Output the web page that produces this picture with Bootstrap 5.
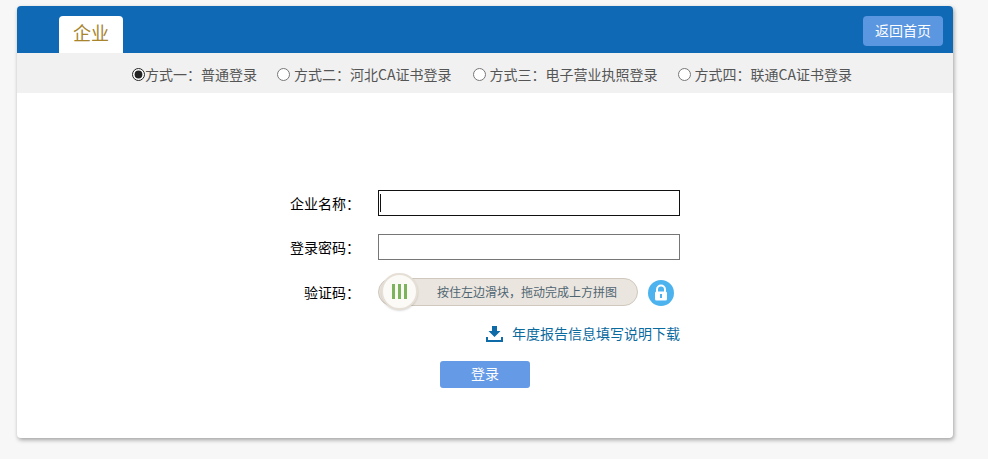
<!DOCTYPE html>
<html lang="zh-CN">
<head>
  <meta charset="UTF-8">
  <meta name="viewport" content="width=device-width, initial-scale=1.0">
  <title>企业登录</title>
  <link href="https://cdn.jsdelivr.net/npm/bootstrap@5.3.0/dist/css/bootstrap.min.css" rel="stylesheet">
  <style>
    body { background: #f7f7f7; font-family: "Liberation Sans", "Noto Sans CJK SC", sans-serif; font-size: 14px; color: #000; padding-top: 6px; min-height: 100vh; }
    .login-panel { width: 936px; height: 432px; margin-left: 17px; background: #fff; border-radius: 4px; box-shadow: 1px 2px 4px rgba(0,0,0,.35); overflow: hidden; }
    .login-head { height: 47px; background: #0f69b5; padding: 10px 10px 0 42px; }
    .login-tab { width: 64px; height: 37px; background: #fff; border-radius: 4px 4px 0 0; color: #a8842c; font-size: 18px; line-height: 37px; text-align: center; }
    .back-btn { width: 80px; height: 30px; padding: 0; background: #5b96e0; border: 0; border-radius: 4px; color: #fff; font-size: 14px; line-height: 30px; }
    .way-bar { height: 40px; background: #f1f1f1; color: #555; gap: 21px; padding-left: 14px; padding-top: 2px; font-family: "Noto Sans CJK SC", sans-serif; }
    .way-bar label { display: flex; align-items: center; gap: 4px; white-space: nowrap; }
    .way-bar label:first-child { gap: 0; margin-right: -1px; }
    .way-bar label:nth-child(3) { margin-right: -1px; }
    .way-bar input { width: 13px; height: 13px; margin: 0; accent-color: #222; }
    .login-form { padding-top: 97px; width: 663px; }
    .form-line { display: flex; align-items: center; height: 26px; margin-bottom: 18px; }
    .form-line label { width: 335px; margin-right: 26px; text-align: right; position: relative; left: 8px; top: 1px; }
    .text-box { width: 302px; height: 26px; border: 1px solid #767676; padding: 0 2px; background: #fff; outline: 0; }
    .text-box:focus { border-color: #111; background: #fff linear-gradient(#111, #111) no-repeat 1px center / 1px 18px; }
    .slide-line { margin-top: 19px; margin-bottom: 19px; }
    .slide-track { position: relative; width: 260px; height: 28px; background: #ebe5df; border: 1px solid #cfc8bd; border-radius: 14px; color: #4f6672; font-size: 12px; line-height: 29px; padding-left: 58px; }
    .slide-knob { position: absolute; left: 2px; top: -6px; width: 37px; height: 37px; border-radius: 50%; background: #fbfaf7; border: 2px solid #e6dfd6; box-shadow: 0 1px 2px rgba(0,0,0,.15); display: flex; align-items: center; justify-content: center; gap: 3px; }
    .slide-knob i { display: block; width: 3px; height: 15px; background: #7cb35c; }
    .lock-ico { margin-left: 10px; margin-top: 1px; }
    .down-line { width: 663px; height: 24px; margin-top: -2px; color: #0b6a9e; gap: 9px; }
    .down-line a { color: #0b6a9e; text-decoration: none; }
    .submit-btn { display: block; width: 90px; height: 27px; padding: 0; margin: 15px 0 0 423px; background: #659ae6; border: 0; border-radius: 3px; color: #fff; font-size: 14px; }
  </style>
</head>
<body>
  <div class="login-panel">
    <div class="login-head d-flex justify-content-between align-items-start">
      <div class="login-tab">企业</div>
      <button type="button" class="back-btn">返回首页</button>
    </div>
    <div class="way-bar d-flex justify-content-center align-items-center">
      <label><input type="radio" name="way" checked>方式一：普通登录</label>
      <label><input type="radio" name="way">方式二：河北CA证书登录</label>
      <label><input type="radio" name="way">方式三：电子营业执照登录</label>
      <label><input type="radio" name="way">方式四：联通CA证书登录</label>
    </div>
    <form class="login-form">
      <div class="form-line">
        <label for="company">企业名称：</label>
        <input type="text" id="company" class="text-box" autofocus>
      </div>
      <div class="form-line">
        <label for="pwd">登录密码：</label>
        <input type="password" id="pwd" class="text-box">
      </div>
      <div class="form-line slide-line">
        <label>验证码：</label>
        <div class="slide-track">
          <span class="slide-knob"><i></i><i></i><i></i></span>
          按住左边滑块，拖动完成上方拼图
        </div>
        <svg class="lock-ico" width="26" height="26" viewBox="0 0 26 26">
          <circle cx="13" cy="13" r="13" fill="#4db3ee"/>
          <path d="M9 12V9.500a4 4 0 0 1 8 0V12" fill="none" stroke="#fff" stroke-width="2"/>
          <rect x="7" y="11.500" width="12" height="9" rx="1.500" fill="#fff"/>
          <rect x="12" y="14" width="2" height="4" fill="#4db3ee"/>
        </svg>
      </div>
      <div class="down-line d-flex justify-content-end align-items-center">
        <svg width="17" height="16" viewBox="0 0 17 16">
          <path d="M6 0h5v5h3.500L8.500 11 2.500 5H6z" fill="#0f6ba8"/>
          <path d="M1 11v4h15v-4" fill="none" stroke="#0f6ba8" stroke-width="2"/>
        </svg>
        <a href="#">年度报告信息填写说明下载</a>
      </div>
      <button type="button" class="submit-btn">登录</button>
    </form>
  </div>
  <script src="https://cdn.jsdelivr.net/npm/bootstrap@5.3.0/dist/js/bootstrap.bundle.min.js"></script>
</body>
</html>
